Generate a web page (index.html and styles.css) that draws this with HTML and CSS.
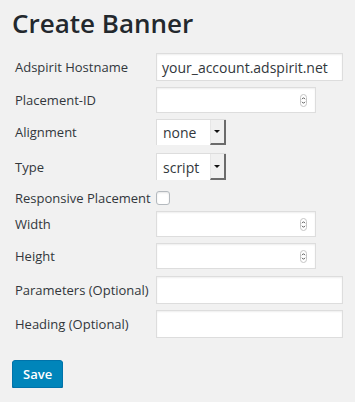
FILE: index.html
```html
<!DOCTYPE html>
<html>
<head>
<meta charset="utf-8">
<link rel="stylesheet" href="styles.css">
</head>
<body>
<div class="wrap">
  <h1 class="title">Create Banner</h1>
  <form class="form">
    <div class="row r1">
      <label class="lbl">Adspirit Hostname</label>
      <div class="field text"><span class="val">your_account.adspirit.net</span></div>
    </div>
    <div class="row r2">
      <label class="lbl">Placement-ID</label>
      <div class="field num"><span class="val"></span>
        <svg class="spin" width="7" height="13" viewBox="0 0 7 13"><rect x="0.5" y="0.5" width="6" height="12" rx="3" fill="#fff" stroke="#c4c4c4"/><path d="M2 5.2 L3.5 3.7 L5 5.2" fill="none" stroke="#555" stroke-width="1"/><path d="M2 7.8 L3.5 9.3 L5 7.8" fill="none" stroke="#555" stroke-width="1"/></svg>
      </div>
    </div>
    <div class="row r3">
      <label class="lbl">Alignment</label>
      <div class="select"><span class="sval">none</span><span class="sbtn"><span class="arrow"></span></span></div>
    </div>
    <div class="row r4">
      <label class="lbl">Type</label>
      <div class="select tall"><span class="sval">script</span><span class="sbtn"><span class="arrow"></span></span></div>
    </div>
    <div class="row r5">
      <label class="lbl">Responsive Placement</label>
      <span class="check"></span>
    </div>
    <div class="row r6">
      <label class="lbl">Width</label>
      <div class="field num"><span class="val"></span>
        <svg class="spin" width="7" height="13" viewBox="0 0 7 13"><rect x="0.5" y="0.5" width="6" height="12" rx="3" fill="#fff" stroke="#c4c4c4"/><path d="M2 5.2 L3.5 3.7 L5 5.2" fill="none" stroke="#555" stroke-width="1"/><path d="M2 7.8 L3.5 9.3 L5 7.8" fill="none" stroke="#555" stroke-width="1"/></svg>
      </div>
    </div>
    <div class="row r7">
      <label class="lbl">Height</label>
      <div class="field num"><span class="val"></span>
        <svg class="spin" width="7" height="13" viewBox="0 0 7 13"><rect x="0.5" y="0.5" width="6" height="12" rx="3" fill="#fff" stroke="#c4c4c4"/><path d="M2 5.2 L3.5 3.7 L5 5.2" fill="none" stroke="#555" stroke-width="1"/><path d="M2 7.8 L3.5 9.3 L5 7.8" fill="none" stroke="#555" stroke-width="1"/></svg>
      </div>
    </div>
    <div class="row r8">
      <label class="lbl">Parameters (Optional)</label>
      <div class="field text"><span class="val"></span></div>
    </div>
    <div class="row r9">
      <label class="lbl">Heading (Optional)</label>
      <div class="field text"><span class="val"></span></div>
    </div>
    <div class="actions">
      <span class="btn">Save</span>
    </div>
  </form>
</div>
</body>
</html>
```
FILE: styles.css
```css
html, body {
  margin: 0;
  padding: 0;
  background: #f1f1f1;
}
body {
  font-family: "Open Sans", "Liberation Sans", sans-serif;
  color: #32373c;
  font-size: 13px;
}
.wrap {
  padding-left: 12px;
}
.title {
  margin: 5px 0 0 0;
  font-size: 26px;
  font-weight: 600;
  line-height: 36px;
  color: #23282d;
}
.form {
  margin-top: 12px;
  display: flex;
  flex-direction: column;
}
.row {
  display: flex;
  align-items: center;
}
.lbl {
  width: 144px;
  padding-left: 3px;
  box-sizing: border-box;
  flex: none;
  white-space: nowrap;
  color: #32373c;
}
.r2, .r3, .r6, .r7, .r9 { margin-top: 6px; }
.r4 { margin-top: 8px; }
.r5 { margin-top: 11px; height: 14px; }
.r8 { margin-top: 7px; }

.field {
  box-sizing: border-box;
  border: 1px solid #dddddd;
  background: #fff;
  box-shadow: inset 0 1px 2px rgba(0,0,0,.07);
  display: flex;
  align-items: center;
  font-size: 14px;
  color: #32373c;
}
.field.text {
  width: 187px;
  height: 28px;
  padding-left: 5px;
}
.field.num {
  width: 160px;
  height: 26px;
  padding-right: 8px;
}
.val {
  flex: 1;
}
.spin {
  flex: none;
  display: block;
}
.select {
  box-sizing: border-box;
  width: 70px;
  height: 26px;
  border: 1px solid #dddddd;
  border-right: none;
  border-bottom: none;
  background: #fff;
  display: flex;
  font-size: 14px;
}
.select.tall { height: 27px; }
.sval {
  flex: 1;
  padding-left: 6px;
  display: flex;
  align-items: center;
}
.sbtn {
  width: 16px;
  box-sizing: border-box;
  background: #f0f0f0;
  border-left: 1px solid #e6e6e6;
  border-right: 2px solid #6b6b6b;
  border-bottom: 2px solid #6b6b6b;
  display: flex;
  align-items: center;
  justify-content: center;
}
.arrow {
  width: 0;
  height: 0;
  border-left: 3px solid transparent;
  border-right: 3px solid transparent;
  border-top: 3px solid #111;
  margin-left: -1px;
}
.check {
  box-sizing: border-box;
  width: 14px;
  height: 14px;
  border: 1px solid #b4b9be;
  border-radius: 3px;
  background: #fff;
  box-shadow: inset 0 1px 2px rgba(0,0,0,.1);
}
.actions {
  margin-top: 22px;
  display: flex;
}
.btn {
  box-sizing: border-box;
  height: 28px;
  line-height: 26px;
  padding: 0 10px;
  background: #0085ba;
  border: 1px solid #0073aa;
  border-radius: 3px;
  box-shadow: 0 1px 0 #006799;
  color: #fff;
  font-weight: 600;
  font-size: 13px;
}
```
